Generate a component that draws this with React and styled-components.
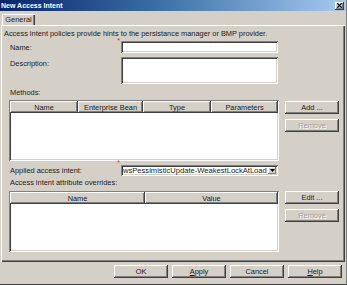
import React from 'react';
import styled, { createGlobalStyle } from 'styled-components';

const Global = createGlobalStyle`
  html, body {
    margin: 0;
    padding: 0;
    background: #d4d0c8;
  }
  body {
    font-family: "Liberation Sans", Arial, sans-serif;
    font-size: 7.4px;
    color: #1a1a1a;
  }
`;

const raised = `
  box-shadow: inset -1px -1px #404040, inset 1px 1px #ffffff,
    inset -2px -2px #808080, inset 2px 2px #d4d0c8;
`;

const sunken = `
  box-shadow: inset 1px 1px #808080, inset -1px -1px #ffffff,
    inset 2px 2px #404040, inset -2px -2px #d4d0c8;
`;

const Window = styled.div`
  width: 347px;
  height: 285px;
  display: flex;
  flex-direction: column;
  background: #d4d0c8;
  box-sizing: border-box;
  border-bottom: 1px solid #404040;
  border-right: 1px solid #808080;
`;

const TitleBar = styled.div`
  height: 11px;
  display: flex;
  align-items: center;
  justify-content: space-between;
  padding: 0 1px 0 1px;
  background: linear-gradient(to right, #0a246a, #3a6ea5 45%, #a6caf0);
  color: #fff;
  font-weight: bold;
  font-size: 7px;
`;

const CloseBox = styled.div`
  width: 9px;
  height: 8px;
  margin-right: 1px;
  background: #d4d0c8;
  ${raised}
  display: flex;
  align-items: center;
  justify-content: center;
`;

const TabRow = styled.div`
  display: flex;
  padding: 3px 0 0 2px;
  height: 11px;
`;

const Tab = styled.div`
  width: 33px;
  height: 11px;
  display: flex;
  align-items: center;
  justify-content: center;
  box-shadow: inset 1px 1px #ffffff, inset -1px 0 #404040, inset -2px 0 #808080;
  box-sizing: border-box;
`;

const Panel = styled.div`
  height: 237px;
  margin: 0 1px 0 1px;
  box-sizing: border-box;
  padding: 4px 2px 0 2px;
  box-shadow: inset 1px 1px #ffffff, inset -1px -1px #404040, inset -2px -2px #808080;
  display: flex;
  flex-direction: column;
`;

const Intro = styled.div`
  height: 9px;
  line-height: 9px;
  padding-left: 1px;
  white-space: nowrap;
`;

const FieldRow = styled.div`
  display: flex;
  align-items: ${p => (p.$top ? 'flex-start' : 'center')};
  margin-top: ${p => p.$mt}px;
  padding-left: 7px;
`;

const Label = styled.div`
  width: 111px;
  padding-top: ${p => (p.$top ? 2 : 0)}px;
  position: relative;
`;

const Required = styled.span`
  position: absolute;
  right: 1px;
  top: ${p => p.$t}px;
  color: #e02020;
  font-size: 7px;
  line-height: 4px;
`;

const Input = styled.div`
  width: 157px;
  height: ${p => p.$h}px;
  background: #fff;
  ${sunken}
`;

const Select = styled.div`
  width: 157px;
  height: 11px;
  background: #fff;
  ${sunken}
  display: flex;
  align-items: center;
  justify-content: space-between;
  padding: 0 2px 0 2px;
  box-sizing: border-box;
  font-size: 7.6px;
`;

const DropButton = styled.div`
  width: 8px;
  height: 7px;
  background: #d4d0c8;
  box-shadow: inset -1px -1px #808080, inset 1px 1px #ffffff;
  display: flex;
  align-items: center;
  justify-content: center;
`;

const SectionLabel = styled.div`
  margin-top: ${p => p.$mt}px;
  padding-left: 7px;
  height: 9px;
  line-height: 9px;
`;

const TableRow = styled.div`
  display: flex;
  margin-top: ${p => p.$mt}px;
  padding-left: 6px;
`;

const Table = styled.div`
  width: 270px;
  height: 61px;
  background: #fff;
  ${sunken}
  padding: 1px;
  box-sizing: border-box;
`;

const Header = styled.div`
  display: grid;
  grid-template-columns: ${p => p.$cols};
  height: 12px;
`;

const HeadCell = styled.div`
  background: #d4d0c8;
  ${raised}
  display: flex;
  align-items: center;
  justify-content: center;
`;

const SideButtons = styled.div`
  display: flex;
  flex-direction: column;
  gap: 5px;
  margin-left: 6px;
  padding-top: ${p => p.$pt}px;
`;

const Button = styled.div`
  width: ${p => p.$w || 54}px;
  height: 13px;
  background: #d4d0c8;
  ${raised}
  display: flex;
  align-items: center;
  justify-content: center;
  color: ${p => (p.$disabled ? '#a0a0a0' : '#1a1a1a')};
  text-shadow: ${p => (p.$disabled ? '1px 1px #ffffff' : 'none')};
`;

const ButtonBar = styled.div`
  display: flex;
  justify-content: flex-end;
  gap: 4px;
  padding: 3px 4px 0 0;
`;

const U = styled.span`
  text-decoration: underline;
`;

export default function App() {
  return (
    <>
      <Global />
      <Window>
        <TitleBar>
          <span>New Access Intent</span>
          <CloseBox>
            <svg width="5" height="5" viewBox="0 0 5 5">
              <path d="M0 0 L5 5 M5 0 L0 5" stroke="#000" strokeWidth="1.2" />
            </svg>
          </CloseBox>
        </TitleBar>
        <TabRow>
          <Tab>General</Tab>
        </TabRow>
        <Panel>
          <Intro>Access intent policies provide hints to the persistance manager or BMP provider.</Intro>
          <FieldRow $mt={3}>
            <Label>
              Name:
              <Required $t={-4}>*</Required>
            </Label>
            <Input $h={12} />
          </FieldRow>
          <FieldRow $mt={4} $top>
            <Label $top>Description:</Label>
            <Input $h={27} />
          </FieldRow>
          <SectionLabel $mt={4}>Methods:</SectionLabel>
          <TableRow $mt={3}>
            <Table>
              <Header $cols="68px 65px 68px 67px">
                <HeadCell>Name</HeadCell>
                <HeadCell>Enterprise Bean</HeadCell>
                <HeadCell>Type</HeadCell>
                <HeadCell>Parameters</HeadCell>
              </Header>
            </Table>
            <SideButtons $pt={1}>
              <Button>Add ...</Button>
              <Button $disabled>Remove</Button>
            </SideButtons>
          </TableRow>
          <FieldRow $mt={4}>
            <Label>
              Applied access intent:
              <Required $t={-5}>*</Required>
            </Label>
            <Select>
              <span>wsPessimisticUpdate-WeakestLockAtLoad</span>
              <DropButton>
                <svg width="5" height="3" viewBox="0 0 5 3">
                  <path d="M0 0 H5 L2.5 3 Z" fill="#000" />
                </svg>
              </DropButton>
            </Select>
          </FieldRow>
          <SectionLabel $mt={2}>Access intent attribute overrides:</SectionLabel>
          <TableRow $mt={4}>
            <Table>
              <Header $cols="135px 133px">
                <HeadCell>Name</HeadCell>
                <HeadCell>Value</HeadCell>
              </Header>
            </Table>
            <SideButtons $pt={0}>
              <Button>Edit ...</Button>
              <Button $disabled>Remove</Button>
            </SideButtons>
          </TableRow>
        </Panel>
        <ButtonBar>
          <Button>OK</Button>
          <Button>
            <span>
              <U>A</U>pply
            </span>
          </Button>
          <Button>Cancel</Button>
          <Button>
            <span>
              <U>H</U>elp
            </span>
          </Button>
        </ButtonBar>
      </Window>
    </>
  );
}
